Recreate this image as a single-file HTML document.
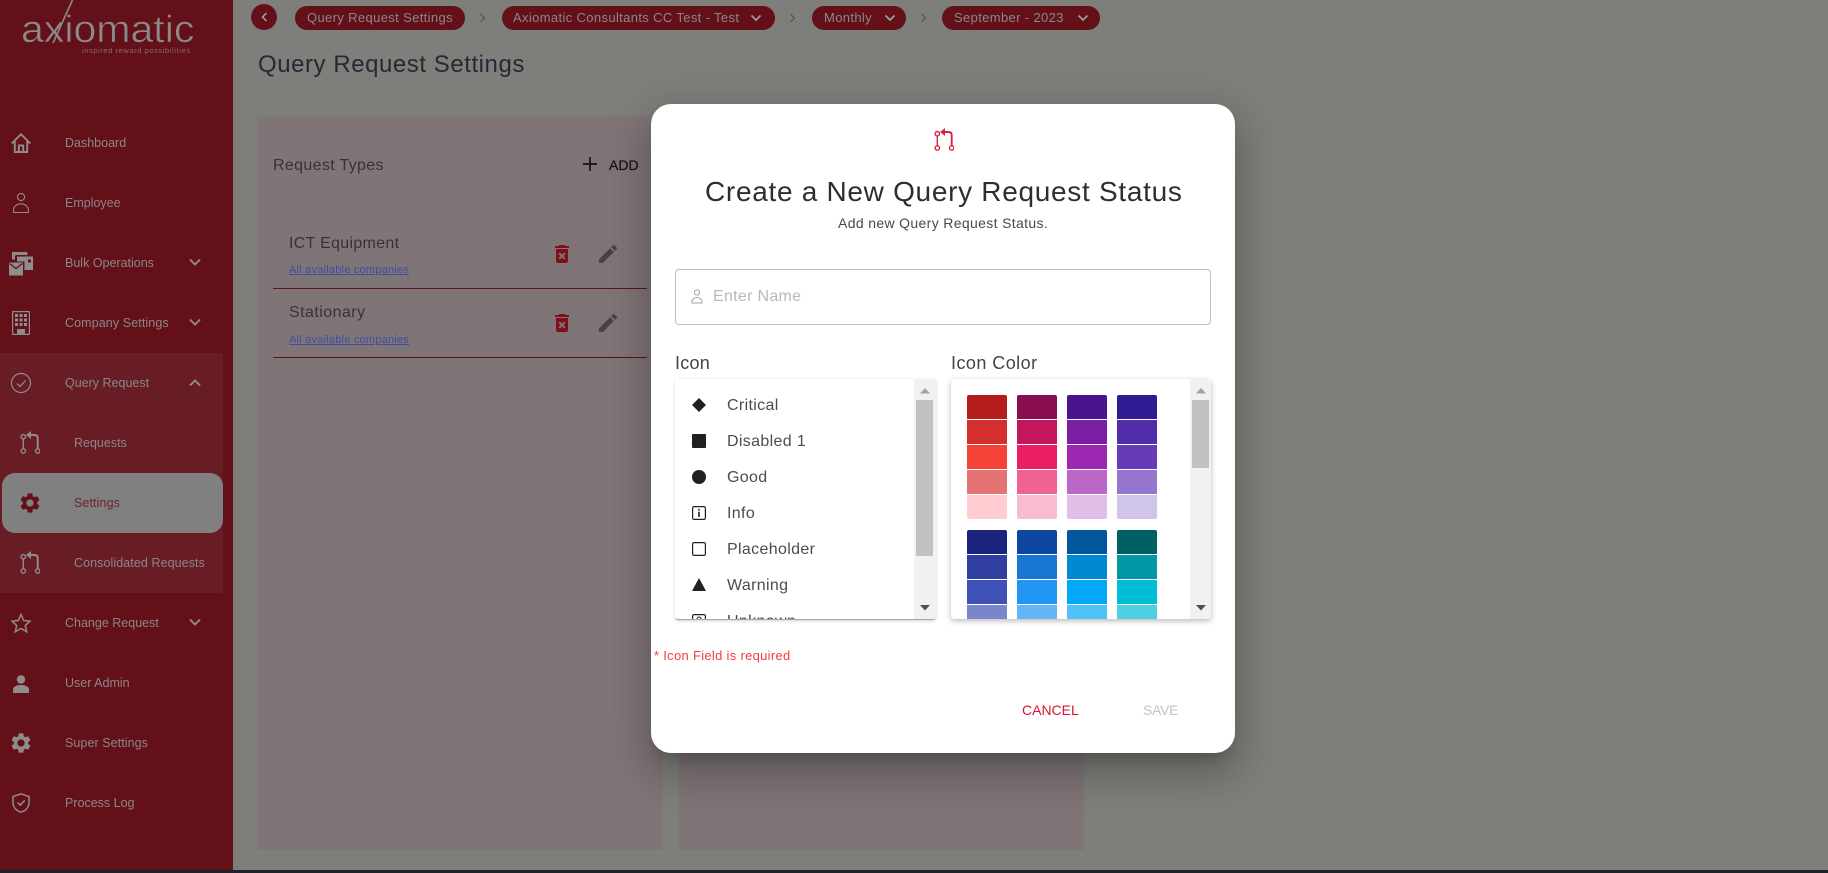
<!DOCTYPE html>
<html lang="en"><head><meta charset="utf-8"><title>Query Request Settings</title>
<style>
*{box-sizing:border-box}
html,body{margin:0;padding:0;width:1828px;height:873px;overflow:hidden;background:#7e7e7b;font-family:"Liberation Sans",sans-serif}
.a{position:absolute}
.t{position:absolute;white-space:nowrap;line-height:20px;height:20px}
svg{position:absolute;overflow:visible}
.side{color:#8b8788;font-size:12.5px}
.pill{position:absolute;top:6px;height:24px;border-radius:12px;background:#641018}
.pt{color:#8b8788;font-size:13px;letter-spacing:.36px;top:8px}
.li{color:#4c4c4c;font-size:16px;letter-spacing:.35px}
.sw{position:absolute;width:40px;height:24px}
</style></head>
<body>
<svg width="0" height="0" style="position:absolute">
<defs>
<symbol id="pr" viewBox="0 0 20 23"><g fill="none" stroke="currentColor" stroke-width="1.4"><circle cx="3.3" cy="5.7" r="2.2"/><circle cx="3.3" cy="20" r="2.2"/><circle cx="17.7" cy="20" r="2.2"/><path d="M3.3 7.9V17.8"/></g><path d="M17.7 17.8V7.2Q17.7 4 14.500 4H9.500" fill="none" stroke="currentColor" stroke-width="1.9"/><path d="M6 4 11 0V8Z" fill="currentColor"/></symbol>
<symbol id="gear" viewBox="2 2 20 20"><path fill="currentColor" d="M19.14 12.94c.04-.3.06-.61.06-.94 0-.32-.02-.64-.07-.94l2.03-1.58a.49.49 0 0 0 .12-.61l-1.92-3.32a.488.488 0 0 0-.59-.22l-2.39.96c-.5-.38-1.03-.7-1.62-.94l-.36-2.54a.484.484 0 0 0-.48-.41h-3.84c-.24 0-.43.17-.47.41l-.36 2.54c-.59.24-1.13.57-1.62.94l-2.39-.96c-.22-.08-.47 0-.59.22L2.74 8.87c-.12.21-.08.47.12.61l2.03 1.58c-.05.3-.09.63-.09.94s.02.64.07.94l-2.03 1.58a.49.49 0 0 0-.12.61l1.92 3.32c.12.22.37.29.59.22l2.39-.96c.5.38 1.03.7 1.62.94l.36 2.54c.05.24.24.41.48.41h3.84c.24 0 .44-.17.47-.41l.36-2.54c.59-.24 1.13-.56 1.62-.94l2.39.96c.22.08.47 0 .59-.22l1.92-3.32c.12-.22.07-.47-.12-.61l-2.01-1.58zM12 15.6c-1.98 0-3.6-1.62-3.6-3.6s1.62-3.6 3.6-3.6 3.6 1.62 3.6 3.6-1.62 3.6-3.6 3.6z"/></symbol>
<symbol id="del" viewBox="0 0 24 24"><path fill="currentColor" d="M6 19c0 1.1.9 2 2 2h8c1.1 0 2-.9 2-2V7H6v12zm2.46-7.12 1.41-1.41L12 12.59l2.12-2.12 1.41 1.41L13.41 14l2.12 2.12-1.41 1.41L12 15.41l-2.12 2.12-1.41-1.41L10.59 14l-2.13-2.12zM15.5 4l-1-1h-5l-1 1H5v2h14V4z"/></symbol>
<symbol id="edit" viewBox="0 0 24 24"><path fill="currentColor" d="M3 17.25V21h3.75L17.81 9.94l-3.75-3.75L3 17.25zM20.71 7.04c.39-.39.39-1.02 0-1.41l-2.34-2.34c-.39-.39-1.02-.39-1.41 0l-1.83 1.83 3.75 3.75 1.83-1.83z"/></symbol>
</defs>
</svg>

<!-- Main area -->
<div class="a" style="left:257px;top:116px;width:406px;height:734px;background:#7f7576"></div>
<div class="a" style="left:679px;top:116px;width:405px;height:734px;background:#7f7576"></div>

<!-- Top bar -->
<div class="a" style="left:251px;top:4px;width:26px;height:26px;border-radius:50%;background:#641018"></div>
<svg style="left:251px;top:4px" width="26" height="26"><path d="M15.5 9 11.5 13 15.5 17" fill="none" stroke="#a9a3a3" stroke-width="1.5"/></svg>
<div class="pill" style="left:295px;width:170px"></div>
<div class="t pt" style="left:307px">Query Request Settings</div>
<svg style="left:479px;top:13px" width="8" height="10"><path d="M1.5 1 5.5 5 1.5 9" fill="none" stroke="#4f4f4f" stroke-width="1"/></svg>
<div class="pill" style="left:502px;width:273px"></div>
<div class="t pt" style="left:513px">Axiomatic Consultants CC Test - Test</div>
<svg style="left:750px;top:14px" width="12" height="8"><path d="M1.5 1.5 6 6 10.5 1.5" fill="none" stroke="#a09c9c" stroke-width="1.7"/></svg>
<svg style="left:789px;top:13px" width="8" height="10"><path d="M1.5 1 5.5 5 1.5 9" fill="none" stroke="#4f4f4f" stroke-width="1"/></svg>
<div class="pill" style="left:812px;width:94px"></div>
<div class="t pt" style="left:824px">Monthly</div>
<svg style="left:884px;top:14px" width="12" height="8"><path d="M1.5 1.5 6 6 10.5 1.5" fill="none" stroke="#a09c9c" stroke-width="1.7"/></svg>
<svg style="left:920px;top:13px" width="8" height="10"><path d="M1.5 1 5.5 5 1.5 9" fill="none" stroke="#4f4f4f" stroke-width="1"/></svg>
<div class="pill" style="left:942px;width:158px"></div>
<div class="t pt" style="left:954px">September - 2023</div>
<svg style="left:1077px;top:14px" width="12" height="8"><path d="M1.5 1.5 6 6 10.5 1.5" fill="none" stroke="#a09c9c" stroke-width="1.7"/></svg>

<div class="t" style="left:258px;top:55px;font-size:24px;letter-spacing:.55px;color:#252a32">Query Request Settings</div>

<!-- Card content -->
<div class="t" style="left:273px;top:156px;font-size:16px;letter-spacing:.34px;color:#353434">Request Types</div>
<svg style="left:583px;top:157px" width="14" height="14"><path d="M7 0V14M0 7H14" stroke="#141414" stroke-width="1.7"/></svg>
<div class="t" style="left:609px;top:155px;font-size:14px;color:#141414;-webkit-text-stroke:.2px #141414">ADD</div>

<div class="t" style="left:289px;top:234px;font-size:16px;letter-spacing:.3px;color:#353434">ICT Equipment</div>
<div class="t" style="left:289px;top:260px;font-size:11px;letter-spacing:.22px;color:#3f4da6;text-decoration:underline">All available companies</div>
<svg style="left:550px;top:242px;color:#7d1018" width="24" height="24"><use href="#del"/></svg>
<svg style="left:596px;top:242px;color:#444" width="24" height="24"><use href="#edit"/></svg>
<div class="a" style="left:273px;top:288px;width:374px;height:1px;background:#641018"></div>

<div class="t" style="left:289px;top:303px;font-size:16px;letter-spacing:.45px;color:#353434">Stationary</div>
<div class="t" style="left:289px;top:330px;font-size:11px;letter-spacing:.22px;color:#3f4da6;text-decoration:underline">All available companies</div>
<svg style="left:550px;top:311px;color:#7d1018" width="24" height="24"><use href="#del"/></svg>
<svg style="left:596px;top:311px;color:#444" width="24" height="24"><use href="#edit"/></svg>
<div class="a" style="left:273px;top:357px;width:374px;height:1px;background:#641018"></div>

<!-- Sidebar -->
<div class="a" style="left:0;top:0;width:233px;height:870px;background:#641018"></div>
<div class="a" style="left:0;top:353px;width:223px;height:240px;background:#681c24"></div>
<div class="a" style="left:2px;top:473px;width:221px;height:60px;border-radius:13px;background:#808080"></div>

<!-- Logo -->
<div class="t" style="left:21px;top:8px;height:44px;line-height:44px;font-size:38px;color:#8a8a8a;-webkit-text-stroke:.6px #641018;transform:scaleX(1.08);transform-origin:left center">axiomatic</div>
<svg style="left:0;top:0" width="233" height="60"><path d="M72.500 0 53 43" stroke="#8a8a8a" stroke-width="1.6"/></svg>
<div class="t" style="left:82px;top:41px;font-size:7.5px;letter-spacing:.58px;color:#8a6a6c">inspired reward possibilities</div>

<div class="t side" style="left:65px;top:133px">Dashboard</div>
<div class="t side" style="left:65px;top:193px">Employee</div>
<div class="t side" style="left:65px;top:253px">Bulk Operations</div>
<div class="t side" style="left:65px;top:313px;letter-spacing:.1px">Company Settings</div>
<div class="t side" style="left:65px;top:373px">Query Request</div>
<div class="t side" style="left:74px;top:433px">Requests</div>
<div class="t side" style="left:74px;top:493px;color:#6e1f2c;letter-spacing:.1px">Settings</div>
<div class="t side" style="left:74px;top:553px;letter-spacing:.08px">Consolidated Requests</div>
<div class="t side" style="left:65px;top:613px">Change Request</div>
<div class="t side" style="left:65px;top:673px">User Admin</div>
<div class="t side" style="left:65px;top:733px;letter-spacing:.07px">Super Settings</div>
<div class="t side" style="left:65px;top:793px">Process Log</div>

<!-- Sidebar chevrons -->
<svg style="left:0;top:0" width="233" height="870" fill="none" stroke="#918e8e" stroke-width="1.9">
<path d="M190 259.5 195 264.5 200 259.5"/>
<path d="M190 319.5 195 324.5 200 319.5"/>
<path d="M190 385.5 195 380.5 200 385.5"/>
<path d="M190 619.5 195 624.5 200 619.5"/>
</svg>

<!-- Sidebar icons -->
<svg style="left:11px;top:133px" width="20" height="20" fill="none" stroke="#8f8c8d" stroke-width="1.9"><path d="M.7 10.500 10 1.200 19.300 10.500M3.800 8V19H16.200V8M7.800 19V12.500H12.200V19"/></svg>
<svg style="left:13px;top:193px" width="16" height="20" fill="none" stroke="#8f8c8d" stroke-width="1.1"><circle cx="8" cy="4" r="3.6"/><path d="M.6 19.5H15.4V17A7.4 6.2 0 0 0 .6 17Z"/></svg>
<svg style="left:9px;top:252px" width="24" height="23">
<path fill="#8f8c8d" d="M3 0H17Q18.500 0 18.500 1.500V3H7.500Q6 3 6 4.500V7.500H3Z"/>
<path fill="#8f8c8d" d="M8 4.500H24V18H15.500V9.500H8Z"/>
<rect x="19" y="7.500" width="3" height="3" fill="#641018"/>
<path fill="#8f8c8d" d="M0 10.500H14V23.500H0Z"/>
<path d="M.5 11.500 7 16.500 13.500 11.500" fill="none" stroke="#641018" stroke-width="1.300"/>
</svg>
<svg style="left:12px;top:311px" width="18" height="24"><rect x=".6" y=".6" width="16.800" height="22.800" rx=".5" fill="none" stroke="#8f8c8d" stroke-width="1.200"/><path fill="#8f8c8d" d="M3 3h3v3H3zM7.500 3h3v3h-3zM12 3h3v3h-3zM3 7.500h3v3H3zM7.500 7.500h3v3h-3zM12 7.500h3v3h-3zM3 12h3v3H3zM7.500 12h3v3h-3zM12 12h3v3h-3zM5 18h8v5.500H5z"/></svg>
<svg style="left:11px;top:373px" width="20" height="20" fill="none" stroke="#8f8c8d"><circle cx="10" cy="10" r="9.500" stroke-width="1.200"/><path d="M6 10.500 9 13.500 14.500 7.500" stroke-width="1.200"/></svg>
<svg style="left:20px;top:431px;color:#8f8c8d" width="20" height="23"><use href="#pr"/></svg>
<svg style="left:20px;top:493px;color:#641018" width="20" height="20"><use href="#gear"/></svg>
<svg style="left:20px;top:551px;color:#8f8c8d" width="20" height="23"><use href="#pr"/></svg>
<svg style="left:11px;top:613px" width="20" height="20"><path d="M10 1.500 12.700 7.500 19 8.200 14.300 12.500 15.700 18.800 10 15.500 4.300 18.800 5.700 12.500 1 8.200 7.300 7.500Z" fill="none" stroke="#8f8c8d" stroke-width="1.500"/></svg>
<svg style="left:13px;top:675px" width="16" height="18" fill="#8f8c8d"><circle cx="8" cy="4.500" r="4.200"/><path d="M0 18V14.500C0 11.500 4 10 8 10S16 11.500 16 14.500V18Z"/></svg>
<svg style="left:11px;top:733px;color:#8f8c8d" width="20" height="20"><use href="#gear"/></svg>
<svg style="left:12px;top:793px" width="18" height="20" fill="none" stroke="#8f8c8d" stroke-width="1.500"><path d="M9 .8 17 3.500V9.500C17 14.500 13.500 17.800 9 19.200 4.500 17.800 1 14.500 1 9.500V3.500Z"/><path d="M5.500 9.500 8.200 12.200 12.800 7.300"/></svg>

<!-- Bottom strip -->
<div class="a" style="left:0;top:870px;width:1828px;height:3px;background:#1e2329"></div>

<!-- Modal -->
<div class="a" style="left:651px;top:104px;width:584px;height:649px;background:#fff;border-radius:20px;box-shadow:0 11px 15px -7px rgba(0,0,0,.2),0 24px 38px 3px rgba(0,0,0,.14),0 9px 46px 8px rgba(0,0,0,.12)"></div>
<svg style="left:934px;top:128px;color:#d6263f" width="20" height="23"><use href="#pr"/></svg>
<div class="t" style="left:705px;top:172px;height:40px;line-height:40px;font-size:28px;letter-spacing:.7px;color:#2e2e2e">Create a New Query Request Status</div>
<div class="t" style="left:838px;top:213px;font-size:14px;letter-spacing:.35px;color:#484848">Add new Query Request Status.</div>

<div class="a" style="left:675px;top:269px;width:536px;height:56px;border:1px solid #bdbdbd;border-radius:4px"></div>
<svg style="left:691px;top:289px" width="12" height="15" fill="none" stroke="#a4a4a4"><circle cx="6" cy="3.500" r="2.600"/><path d="M1 14H11V12.500A5 4 0 0 0 1 12.500Z"/></svg>
<div class="t" style="left:713px;top:287px;font-size:16px;letter-spacing:.3px;color:#b8b8b8">Enter Name</div>

<div class="t" style="left:675px;top:353px;font-size:18px;letter-spacing:.25px;color:#444">Icon</div>
<div class="t" style="left:951px;top:353px;font-size:18px;letter-spacing:.45px;color:#444">Icon Color</div>

<!-- Icon list -->
<div class="a" style="left:675px;top:379px;width:261px;height:241px;background:#fff;border-radius:3px;border-bottom:1px solid #a8a8a8;box-shadow:0 1px 3px rgba(0,0,0,.18);overflow:hidden">
  <div class="t li" style="left:52px;top:17px">Critical</div>
  <div class="t li" style="left:52px;top:53px">Disabled 1</div>
  <div class="t li" style="left:52px;top:89px">Good</div>
  <div class="t li" style="left:52px;top:125px">Info</div>
  <div class="t li" style="left:52px;top:161px">Placeholder</div>
  <div class="t li" style="left:52px;top:197px">Warning</div>
  <div class="t li" style="left:52px;top:233px">Unknown</div>
  <svg style="left:17px;top:19px" width="14" height="14"><path d="M7 0 14 7 7 14 0 7Z" fill="#212121"/></svg>
  <svg style="left:17px;top:55px" width="14" height="14"><rect width="14" height="14" rx="1" fill="#212121"/></svg>
  <svg style="left:17px;top:91px" width="14" height="14"><circle cx="7" cy="7" r="7" fill="#212121"/></svg>
  <svg style="left:17px;top:127px" width="14" height="14"><rect x=".6" y=".6" width="12.800" height="12.800" rx="1.500" fill="none" stroke="#212121" stroke-width="1.200"/><path d="M6.200 3h1.600v1.600H6.200zM6.200 5.800h1.600V11H6.200z" fill="#212121"/></svg>
  <svg style="left:17px;top:163px" width="14" height="14"><rect x=".6" y=".6" width="12.800" height="12.800" rx="1.500" fill="none" stroke="#212121" stroke-width="1.200"/></svg>
  <svg style="left:17px;top:199px" width="14" height="13"><path d="M7 0 14 13H0Z" fill="#212121"/></svg>
  <svg style="left:17px;top:235px" width="14" height="14"><rect x=".6" y=".6" width="12.800" height="12.800" rx="1.500" fill="none" stroke="#212121" stroke-width="1.200"/><circle cx="7" cy="5" r="2" fill="none" stroke="#212121"/></svg>
  <div class="a" style="left:239px;top:0;width:22px;height:240px;background:#f1f1f1"></div>
  <div class="a" style="left:241px;top:21px;width:17px;height:156px;background:#c1c1c1"></div>
  <svg style="left:245px;top:9px" width="10" height="6"><path d="M5 0 10 5.500H0Z" fill="#a3a3a3"/></svg>
  <svg style="left:245px;top:226px" width="10" height="6"><path d="M0 0H10L5 5.500Z" fill="#505050"/></svg>
</div>

<!-- Colour list -->
<div class="a" style="left:951px;top:379px;width:260px;height:240px;background:#fff;border-radius:3px;box-shadow:0 2px 6px rgba(0,0,0,.28);overflow:hidden">
  <div class="sw" style="left:16px;top:16px;background:#b71c1c;border-radius:2px 2px 0 0"></div>
  <div class="sw" style="left:16px;top:41px;background:#d32f2f"></div>
  <div class="sw" style="left:16px;top:66px;background:#f44336"></div>
  <div class="sw" style="left:16px;top:91px;background:#e57373"></div>
  <div class="sw" style="left:16px;top:116px;background:#ffcdd2;border-radius:0 0 2px 2px"></div>
  <div class="sw" style="left:66px;top:16px;background:#880e4f;border-radius:2px 2px 0 0"></div>
  <div class="sw" style="left:66px;top:41px;background:#c2185b"></div>
  <div class="sw" style="left:66px;top:66px;background:#e91e63"></div>
  <div class="sw" style="left:66px;top:91px;background:#f06292"></div>
  <div class="sw" style="left:66px;top:116px;background:#f8bbd0;border-radius:0 0 2px 2px"></div>
  <div class="sw" style="left:116px;top:16px;background:#4a148c;border-radius:2px 2px 0 0"></div>
  <div class="sw" style="left:116px;top:41px;background:#7b1fa2"></div>
  <div class="sw" style="left:116px;top:66px;background:#9c27b0"></div>
  <div class="sw" style="left:116px;top:91px;background:#ba68c8"></div>
  <div class="sw" style="left:116px;top:116px;background:#e1bee7;border-radius:0 0 2px 2px"></div>
  <div class="sw" style="left:166px;top:16px;background:#311b92;border-radius:2px 2px 0 0"></div>
  <div class="sw" style="left:166px;top:41px;background:#512da8"></div>
  <div class="sw" style="left:166px;top:66px;background:#673ab7"></div>
  <div class="sw" style="left:166px;top:91px;background:#9575cd"></div>
  <div class="sw" style="left:166px;top:116px;background:#d1c4e9;border-radius:0 0 2px 2px"></div>
  <div class="sw" style="left:16px;top:151px;background:#1a237e;border-radius:2px 2px 0 0"></div>
  <div class="sw" style="left:16px;top:176px;background:#303f9f"></div>
  <div class="sw" style="left:16px;top:201px;background:#3f51b5"></div>
  <div class="sw" style="left:16px;top:226px;background:#7986cb"></div>
  <div class="sw" style="left:66px;top:151px;background:#0d47a1;border-radius:2px 2px 0 0"></div>
  <div class="sw" style="left:66px;top:176px;background:#1976d2"></div>
  <div class="sw" style="left:66px;top:201px;background:#2196f3"></div>
  <div class="sw" style="left:66px;top:226px;background:#64b5f6"></div>
  <div class="sw" style="left:116px;top:151px;background:#01579b;border-radius:2px 2px 0 0"></div>
  <div class="sw" style="left:116px;top:176px;background:#0288d1"></div>
  <div class="sw" style="left:116px;top:201px;background:#03a9f4"></div>
  <div class="sw" style="left:116px;top:226px;background:#4fc3f7"></div>
  <div class="sw" style="left:166px;top:151px;background:#006064;border-radius:2px 2px 0 0"></div>
  <div class="sw" style="left:166px;top:176px;background:#0097a7"></div>
  <div class="sw" style="left:166px;top:201px;background:#00bcd4"></div>
  <div class="sw" style="left:166px;top:226px;background:#4dd0e1"></div>
  <div class="a" style="left:239px;top:0;width:21px;height:240px;background:#f1f1f1"></div>
  <div class="a" style="left:241px;top:21px;width:17px;height:68px;background:#c1c1c1"></div>
  <svg style="left:245px;top:9px" width="10" height="6"><path d="M5 0 10 5.500H0Z" fill="#a3a3a3"/></svg>
  <svg style="left:245px;top:226px" width="10" height="6"><path d="M0 0H10L5 5.500Z" fill="#505050"/></svg>
</div>

<div class="t" style="left:654px;top:646px;font-size:13px;letter-spacing:.3px;color:#f73b45">* Icon Field is required</div>
<div class="t" style="left:1022px;top:700px;font-size:14px;color:#d8142e">CANCEL</div>
<div class="t" style="left:1143px;top:700px;font-size:14px;letter-spacing:-.3px;color:#c4c4c4">SAVE</div>
</body></html>
